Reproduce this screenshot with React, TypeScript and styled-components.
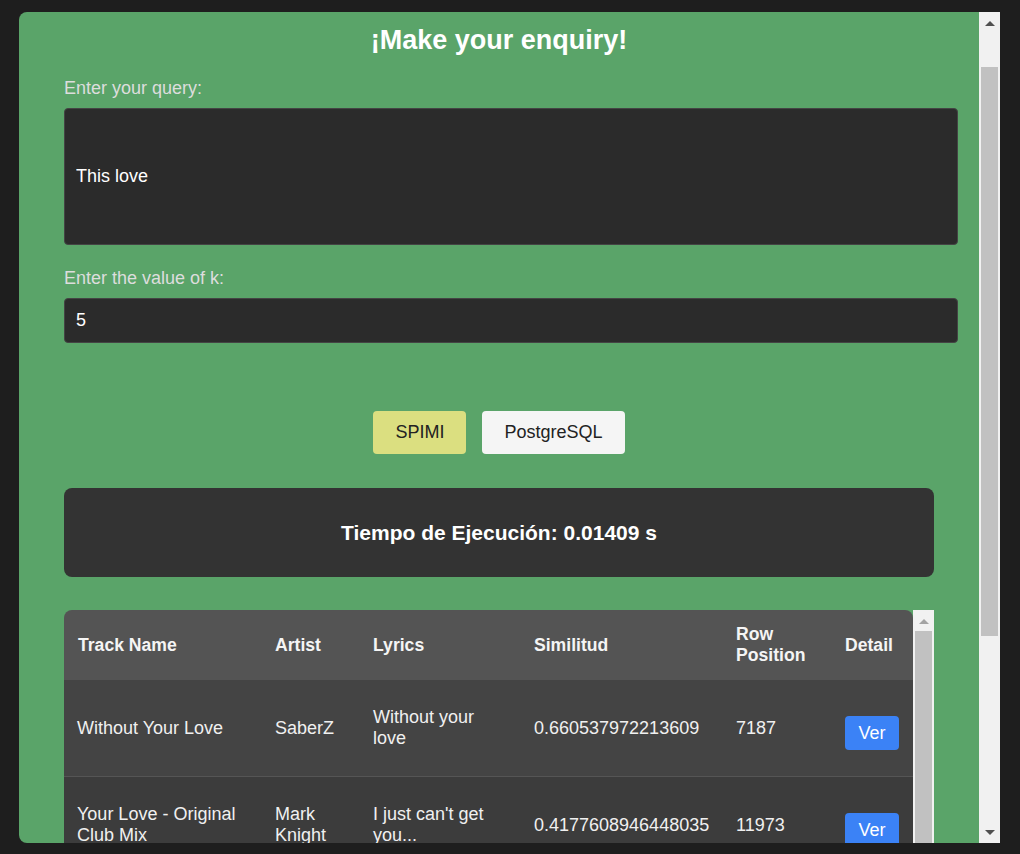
import React, { useLayoutEffect, useRef, useState } from "react";
import styled, { createGlobalStyle } from "styled-components";

const GlobalStyle = createGlobalStyle`
  html, body { margin: 0; padding: 0; background: #1e1e1e; }
  body { font-family: "Liberation Sans", Arial, sans-serif; }
  * { box-sizing: border-box; }
`;

/* ---------- scroll rail (drawn scrollbar beside a scrolling area) ---------- */

const Rail = styled.div`
  flex: none;
  width: 21px;
  align-self: stretch;
  background: #f1f1f1;
  display: flex;
  flex-direction: column;
`;

const RailButton = styled.div`
  flex: none;
  height: 21px;
  display: flex;
  align-items: center;
  justify-content: center;
`;

const Arrow = styled.span<{ $dir: "up" | "down"; $color: string }>`
  width: 0;
  height: 0;
  border-left: 5px solid transparent;
  border-right: 5px solid transparent;
  ${(p) =>
    p.$dir === "up"
      ? `border-bottom: 5px solid ${p.$color}; margin-top: 1px;`
      : `border-top: 5px solid ${p.$color};`}
`;

const RailTrack = styled.div`
  flex: 1;
  position: relative;
`;

const Thumb = styled.div`
  position: absolute;
  left: 2px;
  right: 2px;
  background: #c1c1c1;
`;

type ThumbMetrics = { top: number; height: number };

function useThumb(ref: React.RefObject<HTMLElement | null>, initialScroll = 0): ThumbMetrics {
  const [m, setM] = useState<ThumbMetrics>({ top: 0, height: 0 });
  useLayoutEffect(() => {
    const el = ref.current;
    if (!el) return;
    if (initialScroll) el.scrollTop = initialScroll;
    const update = () => {
      const track = el.clientHeight - 42;
      const height = Math.max(17, (track * el.clientHeight) / el.scrollHeight);
      const top = (track * el.scrollTop) / el.scrollHeight;
      setM({ top, height });
    };
    update();
    el.addEventListener("scroll", update);
    return () => el.removeEventListener("scroll", update);
  }, []);
  return m;
}

function ScrollRail({ thumb, upColor }: { thumb: ThumbMetrics; upColor: string }) {
  return (
    <Rail>
      <RailButton>
        <Arrow $dir="up" $color={upColor} />
      </RailButton>
      <RailTrack>
        <Thumb style={{ top: thumb.top, height: thumb.height }} />
      </RailTrack>
      <RailButton>
        <Arrow $dir="down" $color="#505050" />
      </RailButton>
    </Rail>
  );
}

/* ---------- page ---------- */

const Frame = styled.div`
  margin: 12px 0 0 19px;
  width: 981px;
  height: 831px;
  display: flex;
`;

const Panel = styled.main`
  flex: 1;
  min-width: 0;
  height: 100%;
  overflow-y: scroll;
  scrollbar-width: none;
  &::-webkit-scrollbar { display: none; }
  background: #5aa469;
  border-radius: 8px 0 0 8px;
  padding: 42px 45px 55px;
`;

const Title = styled.h1`
  margin: 20px 0 0;
  font-size: 27px;
  line-height: 32px;
  font-weight: bold;
  color: #ffffff;
  text-align: center;
`;

const FieldGroup = styled.div`
  display: flex;
  flex-direction: column;
  margin-top: 22px;
  & + & { margin-top: 23px; }
`;

const Label = styled.label`
  display: block;
  margin-bottom: 10px;
  font-size: 18px;
  line-height: 20px;
  color: #dddddd;
`;

const Field = styled.input<{ $tall?: boolean }>`
  display: block;
  width: calc(100% + 24px);
  height: ${(p) => (p.$tall ? 137 : 45)}px;
  padding: 0 11px;
  background: #2b2b2b;
  border: 1px solid #444444;
  border-radius: 4px;
  color: #ffffff;
  font-family: "Liberation Sans", Arial, sans-serif;
  font-size: 18px;
  outline: none;
`;

const ButtonRow = styled.div`
  display: flex;
  justify-content: center;
  gap: 16px;
  margin-top: 68px;
`;

const EngineButton = styled.button<{ $active?: boolean }>`
  height: 43px;
  padding: 0 22px;
  border: none;
  border-radius: 4px;
  background: ${(p) => (p.$active ? "#dbdf80" : "#f5f5f5")};
  color: #222222;
  font-family: "Liberation Sans", Arial, sans-serif;
  font-size: 18px;
  cursor: pointer;
`;

const TimeBox = styled.div`
  margin-top: 34px;
  height: 89px;
  background: #333333;
  border-radius: 8px;
  display: flex;
  align-items: center;
  justify-content: center;
  color: #ffffff;
  font-size: 21px;
  font-weight: bold;
`;

const TableArea = styled.div`
  margin-top: 33px;
  display: flex;
`;

const TableWrap = styled.div`
  flex: 1;
  min-width: 0;
  max-height: 450px;
  overflow-y: auto;
  scrollbar-width: none;
  &::-webkit-scrollbar { display: none; }
`;

const Table = styled.table`
  width: 100%;
  border-collapse: separate;
  border-spacing: 0;
  table-layout: fixed;
  color: #f0f0f0;
  font-size: 18px;
  line-height: 21px;
`;

const Th = styled.th`
  background: #545454;
  padding: 14px;
  text-align: left;
  font-size: 17.6px;
  font-weight: bold;
  vertical-align: middle;
  color: #f5f5f5;
  &:first-child { border-top-left-radius: 8px; }
  &:last-child { border-top-right-radius: 8px; }
`;

const Row = styled.tr<{ $alt?: boolean }>`
  height: 97px;
  background: ${(p) => (p.$alt ? "#3c3c3c" : "#444444")};
`;

const Td = styled.td`
  padding: 14px;
  vertical-align: middle;
  border-bottom: 1px solid #555555;
  &:first-child { padding-left: 13px; }
`;

const DetailButton = styled.button`
  display: inline-block;
  vertical-align: middle;
  width: 54px;
  height: 34px;
  margin-top: 10px;
  padding: 0;
  border: none;
  border-radius: 4px;
  background: #3b82f6;
  color: #ffffff;
  font-family: "Liberation Sans", Arial, sans-serif;
  font-size: 18px;
  cursor: pointer;
`;

const columns = [
  { label: "Track Name", width: 197 },
  { label: "Artist", width: 98 },
  { label: "Lyrics", width: 161 },
  { label: "Similitud", width: 202 },
  { label: "Row Position", width: 109 },
  { label: "Detail", width: 82 },
];

const rows = [
  { track: "Without Your Love", artist: "SaberZ", lyrics: "Without your love", sim: "0.660537972213609", pos: "7187" },
  { track: "Your Love - Original Club Mix", artist: "Mark Knight", lyrics: "I just can't get you...", sim: "0.4177608946448035", pos: "11973" },
  { track: "This Love", artist: "Maroon 5", lyrics: "I was so high I...", sim: "0.3912045781336207", pos: "4521" },
  { track: "Love Me Like You Do", artist: "Ellie Goulding", lyrics: "You're the light...", sim: "0.3548120941873312", pos: "9034" },
  { track: "Crazy in Love", artist: "Beyoncé", lyrics: "Yes, so crazy...", sim: "0.3217745520196384", pos: "15402" },
];

export default function App() {
  const panelRef = useRef<HTMLElement>(null);
  const tableRef = useRef<HTMLDivElement>(null);
  const panelThumb = useThumb(panelRef, 50);
  const tableThumb = useThumb(tableRef);

  return (
    <>
      <GlobalStyle />
      <Frame>
        <Panel ref={panelRef}>
          <Title>¡Make your enquiry!</Title>
          <FieldGroup>
            <Label htmlFor="query">Enter your query:</Label>
            <Field id="query" $tall defaultValue="This love" />
          </FieldGroup>
          <FieldGroup>
            <Label htmlFor="k">Enter the value of k:</Label>
            <Field id="k" defaultValue="5" />
          </FieldGroup>
          <ButtonRow>
            <EngineButton $active>SPIMI</EngineButton>
            <EngineButton>PostgreSQL</EngineButton>
          </ButtonRow>
          <TimeBox>Tiempo de Ejecución: 0.01409 s</TimeBox>
          <TableArea>
            <TableWrap ref={tableRef}>
              <Table>
                <colgroup>
                  {columns.map((c) => (
                    <col key={c.label} style={{ width: c.width }} />
                  ))}
                </colgroup>
                <thead>
                  <tr>
                    {columns.map((c) => (
                      <Th key={c.label}>{c.label}</Th>
                    ))}
                  </tr>
                </thead>
                <tbody>
                  {rows.map((r, i) => (
                    <Row key={r.pos} $alt={i % 2 === 1}>
                      <Td>{r.track}</Td>
                      <Td>{r.artist}</Td>
                      <Td>{r.lyrics}</Td>
                      <Td>{r.sim}</Td>
                      <Td>{r.pos}</Td>
                      <Td>
                        <DetailButton>Ver</DetailButton>
                      </Td>
                    </Row>
                  ))}
                </tbody>
              </Table>
            </TableWrap>
            <ScrollRail thumb={tableThumb} upColor="#a3a3a3" />
          </TableArea>
        </Panel>
        <ScrollRail thumb={panelThumb} upColor="#505050" />
      </Frame>
    </>
  );
}
